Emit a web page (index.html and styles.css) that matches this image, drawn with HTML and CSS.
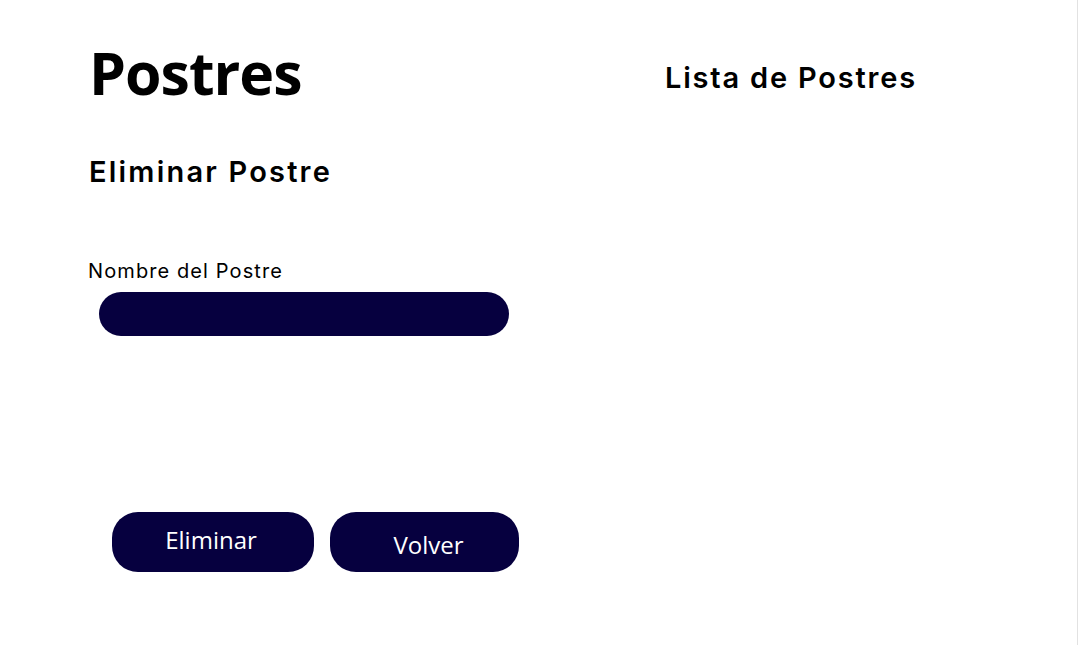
FILE: index.html
```html
<!DOCTYPE html>
<html lang="es">
<head>
<meta charset="utf-8">
<title>Postres</title>
<link rel="stylesheet" href="styles.css">
</head>
<body>
<div class="page">
  <section class="left">
    <h1 class="brand">Postres</h1>
    <h2 class="section-title">Eliminar Postre</h2>
    <form class="form">
      <label class="label" for="nombre">Nombre del Postre</label>
      <input class="input" id="nombre" type="text">
      <div class="actions">
        <button type="button" class="btn btn-delete">Eliminar</button>
        <button type="button" class="btn btn-back">Volver</button>
      </div>
    </form>
  </section>
  <section class="right">
    <h2 class="list-title">Lista de Postres</h2>
  </section>
</div>
</body>
</html>
```

FILE: styles.css
```css
html, body {
  margin: 0;
  padding: 0;
  background: #ffffff;
}

.page {
  display: flex;
  height: 645px;
  box-sizing: border-box;
  border-right: 1px solid #e2e2e2;
  padding-left: 88px;
}

.left {
  width: 577px;
  display: flex;
  flex-direction: column;
}

.brand {
  margin: 34px 0 0 1px;
  font-family: "Open Sans", sans-serif;
  font-weight: 700;
  font-size: 59px;
  line-height: 76px;
  color: #000;
  letter-spacing: -1px;
}

.section-title {
  margin: 42px 0 0 1px;
  font-family: "Inter", sans-serif;
  font-weight: 600;
  font-size: 29px;
  line-height: 40px;
  letter-spacing: 2.2px;
  color: #000;
}

.form {
  display: flex;
  flex-direction: column;
  margin-top: 66px;
}

.label {
  font-family: "Inter", sans-serif;
  font-size: 20px;
  line-height: 26px;
  letter-spacing: 1.1px;
  color: #000;
}

.input {
  margin: 8px 0 0 11px;
  width: 410px;
  height: 44px;
  box-sizing: border-box;
  border: none;
  border-radius: 22px;
  background: #06003f;
}

.actions {
  display: flex;
  gap: 16px;
  margin: 176px 0 0 24px;
}

.btn {
  height: 60px;
  border: none;
  border-radius: 26px;
  background: #06003f;
  color: #ffffff;
  font-family: "Open Sans", sans-serif;
  font-size: 24px;
}

.btn-delete {
  width: 202px;
  padding: 0 4px 6px 0;
}

.btn-back {
  width: 189px;
  padding: 4px 0 0 8px;
}

.right {
  flex: 1;
}

.list-title {
  margin: 58px 0 0 0;
  font-family: "Inter", sans-serif;
  font-weight: 600;
  font-size: 29px;
  line-height: 40px;
  letter-spacing: 1.8px;
  color: #000;
}
```
